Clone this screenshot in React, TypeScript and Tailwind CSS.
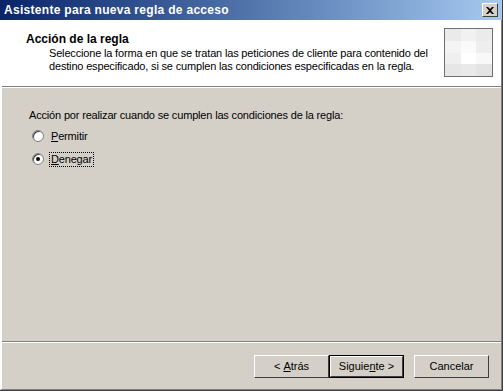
import { useState } from "react";

const font = { fontFamily: "Tahoma, 'Liberation Sans', Arial, sans-serif" };

const TitleBar = () => (
    <div className="flex items-center justify-between h-[20px] pl-[4px] pr-[4px] bg-gradient-to-r from-[#0a246a] to-[#a6caf0]">
        <div className="text-white font-bold text-[12px] tracking-[0.3px] leading-none">Asistente para nueva regla de acceso</div>
        <div className="w-[16px] h-[14px] bg-[#d4d0c8] border border-t-white border-l-white border-b-[#404040] border-r-[#404040] flex items-center justify-center">
            <svg width="8" height="7" viewBox="0 0 8 7">
                <path d="M0 0 L2 0 L4 2 L6 0 L8 0 L5 3.5 L8 7 L6 7 L4 5 L2 7 L0 7 L3 3.5 Z" fill="#000" />
            </svg>
        </div>
    </div>
);

const HeaderIcon = () => (
    <div className="w-[49px] h-[49px] border border-[#6f6f6f] bg-[#ececec] grid grid-cols-3 grid-rows-4">
        <div className="bg-[#eaeaea]" />
        <div className="bg-[#f1f1f1]" />
        <div className="bg-[#ebebeb]" />
        <div className="bg-[#f4f4f4]" />
        <div className="bg-[#fafafa]" />
        <div className="bg-[#eeeeee]" />
        <div className="bg-[#efefef]" />
        <div className="bg-white" />
        <div className="bg-[#f8f8f8]" />
        <div className="bg-[#e6e6e6]" />
        <div className="bg-[#e9e9e9]" />
        <div className="bg-[#e4e4e4]" />
    </div>
);

const Header = () => (
    <div className="flex justify-between bg-white h-[66px] border-b border-[#808080] pl-[24px] pr-[8px] pt-[7px]">
        <div className="text-[11px] text-black">
            <div className="font-bold text-[12px] leading-[14px] mt-[4px]">Acción de la regla</div>
            <div className="pl-[23px] leading-[13px] mt-[1px] tracking-[-0.17px]">
                <div>Seleccione la forma en que se tratan las peticiones de cliente para contenido del</div>
                <div>destino especificado, si se cumplen las condiciones especificadas en la regla.</div>
            </div>
        </div>
        <HeaderIcon />
    </div>
);

const Radio = ({ checked }: { checked: boolean }) => (
    <div className="w-[12px] h-[12px] rounded-full bg-white border border-[#808080] flex items-center justify-center shadow-[inset_1px_1px_0_#404040]">
        {checked && <div className="w-[4px] h-[4px] rounded-full bg-black" />}
    </div>
);

const Button = ({ children, def }: { children: React.ReactNode; def?: boolean }) => (
    <div className={`w-[75px] h-[23px] bg-[#d4d0c8] flex items-center justify-center text-[11px] text-black ${def ? "border border-black" : ""}`}>
        <div className="w-full h-full border border-t-white border-l-white border-b-[#404040] border-r-[#404040] flex items-center justify-center">
            {children}
        </div>
    </div>
);

const App = () => {
    const [choice, setChoice] = useState("deny");

    return (
        <div style={font} className="w-[503px] h-[391px] bg-[#d4d0c8] flex flex-col overflow-hidden border-r border-b border-[#404040]">
            <TitleBar />
            <div className="flex-1 flex flex-col border-l-2 border-white border-r border-r-[#808080] border-b border-b-[#808080]">
                <div className="h-[1px] bg-white" />
                <Header />
                <div className="h-[1px] bg-white" />

                <div className="flex-1 pl-[27px] pt-[21px] text-[11px] leading-[13px] text-black tracking-[-0.17px]">
                    <div>Acción por realizar cuando se cumplen las condiciones de la regla:</div>
                    <div className="flex flex-col gap-[9px] mt-[7px] pl-[3px]">
                        <div className="flex items-center gap-[6px] h-[14px] cursor-pointer" onClick={() => setChoice("allow")}>
                            <Radio checked={choice === "allow"} />
                            <span className="px-[1px]"><span className="underline">P</span>ermitir</span>
                        </div>
                        <div className="flex items-center gap-[6px] h-[14px] cursor-pointer" onClick={() => setChoice("deny")}>
                            <Radio checked={choice === "deny"} />
                            <span className="px-[1px] outline-1 outline-dotted outline-black"><span className="underline">D</span>enegar</span>
                        </div>
                    </div>
                </div>

                <div className="h-[1px] bg-[#808080]" />
                <div className="h-[1px] bg-white" />
                <div className="flex justify-end items-start h-[46px] pt-[12px] pr-[12px]">
                    <Button>&lt; <span className="underline ml-[3px]">A</span>trás</Button>
                    <Button def>Siguie<span className="underline">n</span>te &gt;</Button>
                    <div className="w-[10px]" />
                    <Button>Cancelar</Button>
                </div>
            </div>
        </div>
    );
};

export default App;
